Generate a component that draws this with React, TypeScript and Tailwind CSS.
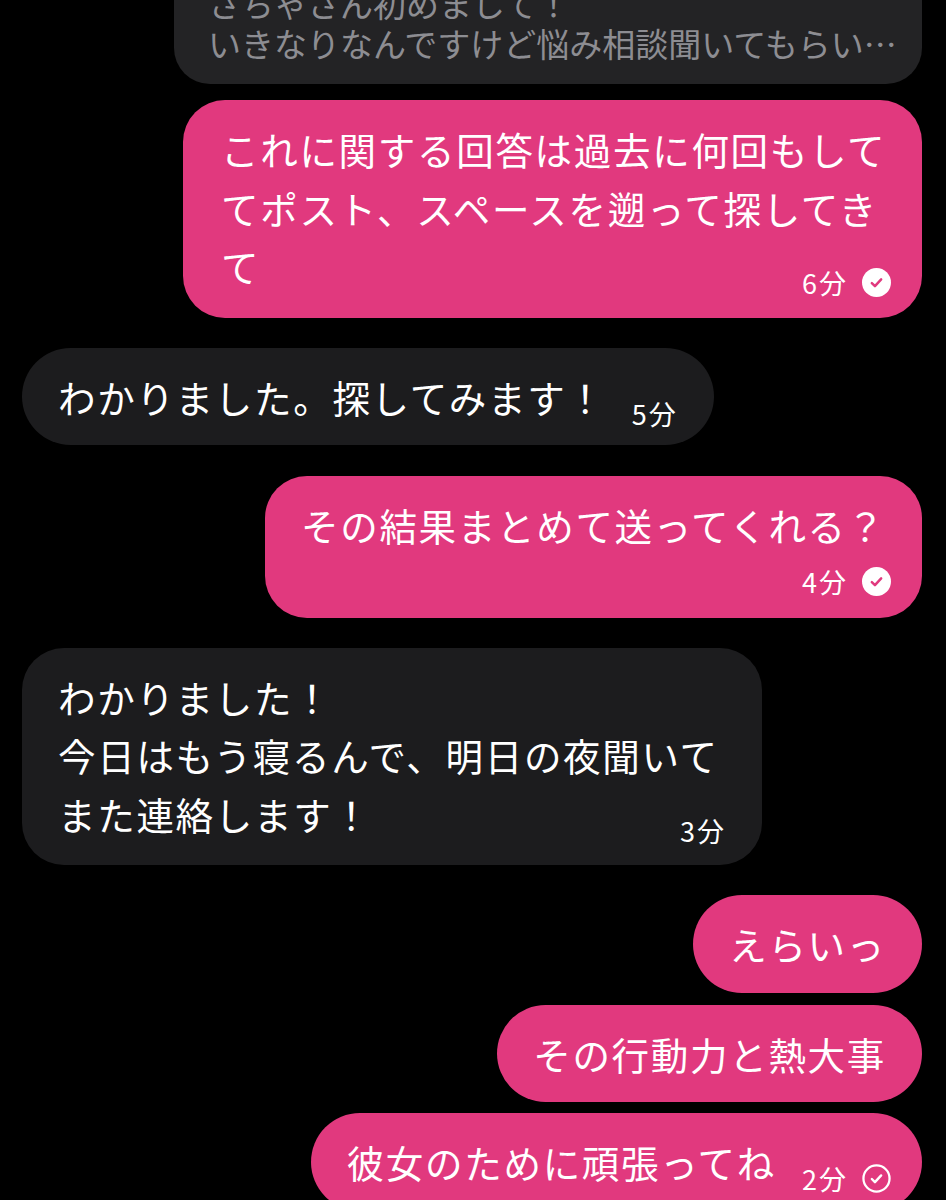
import React from 'react'

const JP = { fontFamily: '"Noto Sans CJK JP", "Noto Sans", sans-serif' }

function Check({ filled }: { filled?: boolean }) {
  if (filled) {
    return (
      <svg width="29" height="29" viewBox="0 0 28 28">
        <circle cx="14" cy="14" r="14" fill="#ffffff" />
        <path d="M9.5 14.5l3 3L18.5 11" fill="none" stroke="#e1397e" strokeWidth="2.4" strokeLinecap="round" strokeLinejoin="round" />
      </svg>
    )
  }
  return (
    <svg width="29" height="29" viewBox="0 0 28 28">
      <circle cx="14" cy="14" r="12.6" fill="none" stroke="#ffffff" strokeWidth="2.2" />
      <path d="M9.5 14.5l3 3L18.5 11" fill="none" stroke="#ffffff" strokeWidth="2.3" strokeLinecap="round" strokeLinejoin="round" />
    </svg>
  )
}

function Meta({ time, check }: { time: string; check?: 'filled' | 'outline' }) {
  return (
    <div className={`flex items-center gap-[14px] h-[30px] shrink-0 text-[27px] leading-none text-white ${check ? 'mr-[-5px]' : ''}`}>
      <span className="tracking-[2px]">{time}</span>
      {check && <Check filled={check === 'filled'} />}
    </div>
  )
}

type Msg = {
  mine: boolean
  lines: string[]
  time?: string
  check?: 'filled' | 'outline'
  below?: boolean // timestamp on its own row
  width?: string
  gap: string
}

const MSGS: Msg[] = [
  { mine: true, lines: ['これに関する回答は過去に何回もして', 'てポスト、スペースを遡って探してき', 'て'], time: '6分', check: 'filled', width: 'w-[739px] pl-[38px]', gap: 'mt-4' },
  { mine: false, lines: ['わかりました。探してみます！'], time: '5分', gap: 'mt-[30px]' },
  { mine: true, lines: ['その結果まとめて送ってくれる？'], time: '4分', check: 'filled', below: true, gap: 'mt-[31px]' },
  { mine: false, lines: ['わかりました！', '今日はもう寝るんで、明日の夜聞いて', 'また連絡します！'], time: '3分', width: 'w-[740px]', gap: 'mt-[30px]' },
  { mine: true, lines: ['えらいっ'], gap: 'mt-[30px]' },
  { mine: true, lines: ['その行動力と熱大事'], gap: 'mt-[12px]' },
  { mine: true, lines: ['彼女のために頑張ってね'], time: '2分', check: 'outline', gap: 'mt-[11px]' },
]

function Bubble({ m }: { m: Msg }) {
  const last = m.lines[m.lines.length - 1]
  const rest = m.lines.slice(0, -1)
  const single = m.lines.length === 1 && !m.below
  return (
    <div className={`flex ${m.mine ? 'justify-end' : 'justify-start'} ${m.gap}`}>
      <div
        className={`px-[36px] pt-[20px] text-white ${m.width ?? ''} ${m.mine ? 'bg-[#e1397e]' : 'bg-[#1c1c1e]'} ${single ? 'rounded-[49px] pb-[19px]' : 'rounded-[42px] pb-[22px]'}`}
      >
        <div className="text-[37.5px] leading-[58.5px] tracking-[1.7px] whitespace-nowrap">
          {rest.map((l, i) => <div key={i}>{l}</div>)}
          {m.below || !m.time ? (
            <div>{last}</div>
          ) : (
            <div className="flex items-end justify-between gap-[26px]">
              <span>{last}</span>
              <div className="mb-[-2px]">
                <Meta time={m.time} check={m.check} />
              </div>
            </div>
          )}
        </div>
        {m.below && m.time && (
          <div className="flex justify-end mt-[12px] mb-[-1px]">
            <Meta time={m.time} check={m.check} />
          </div>
        )}
      </div>
    </div>
  )
}

export default function App() {
  return (
    <div className="w-[946px] h-[1200px] overflow-hidden bg-black" style={JP}>
      <div className="pl-[22px] pr-[24px]">
        {/* quoted message preview, cut off at top */}
        <div className="flex justify-end -mt-[35px]">
          <div className="w-[748px] bg-[#232325] rounded-[36px] pl-[34px] pr-[20px] pt-[18px] pb-[21px]">
            <div className="text-[33px] leading-[40px] text-[#8d8d92] whitespace-nowrap">
              <div>さちゃさん初めまして！</div>
              <div>いきなりなんですけど悩み相談聞いてもらい…</div>
            </div>
          </div>
        </div>
        {MSGS.map((m, i) => <Bubble key={i} m={m} />)}
      </div>
    </div>
  )
}
